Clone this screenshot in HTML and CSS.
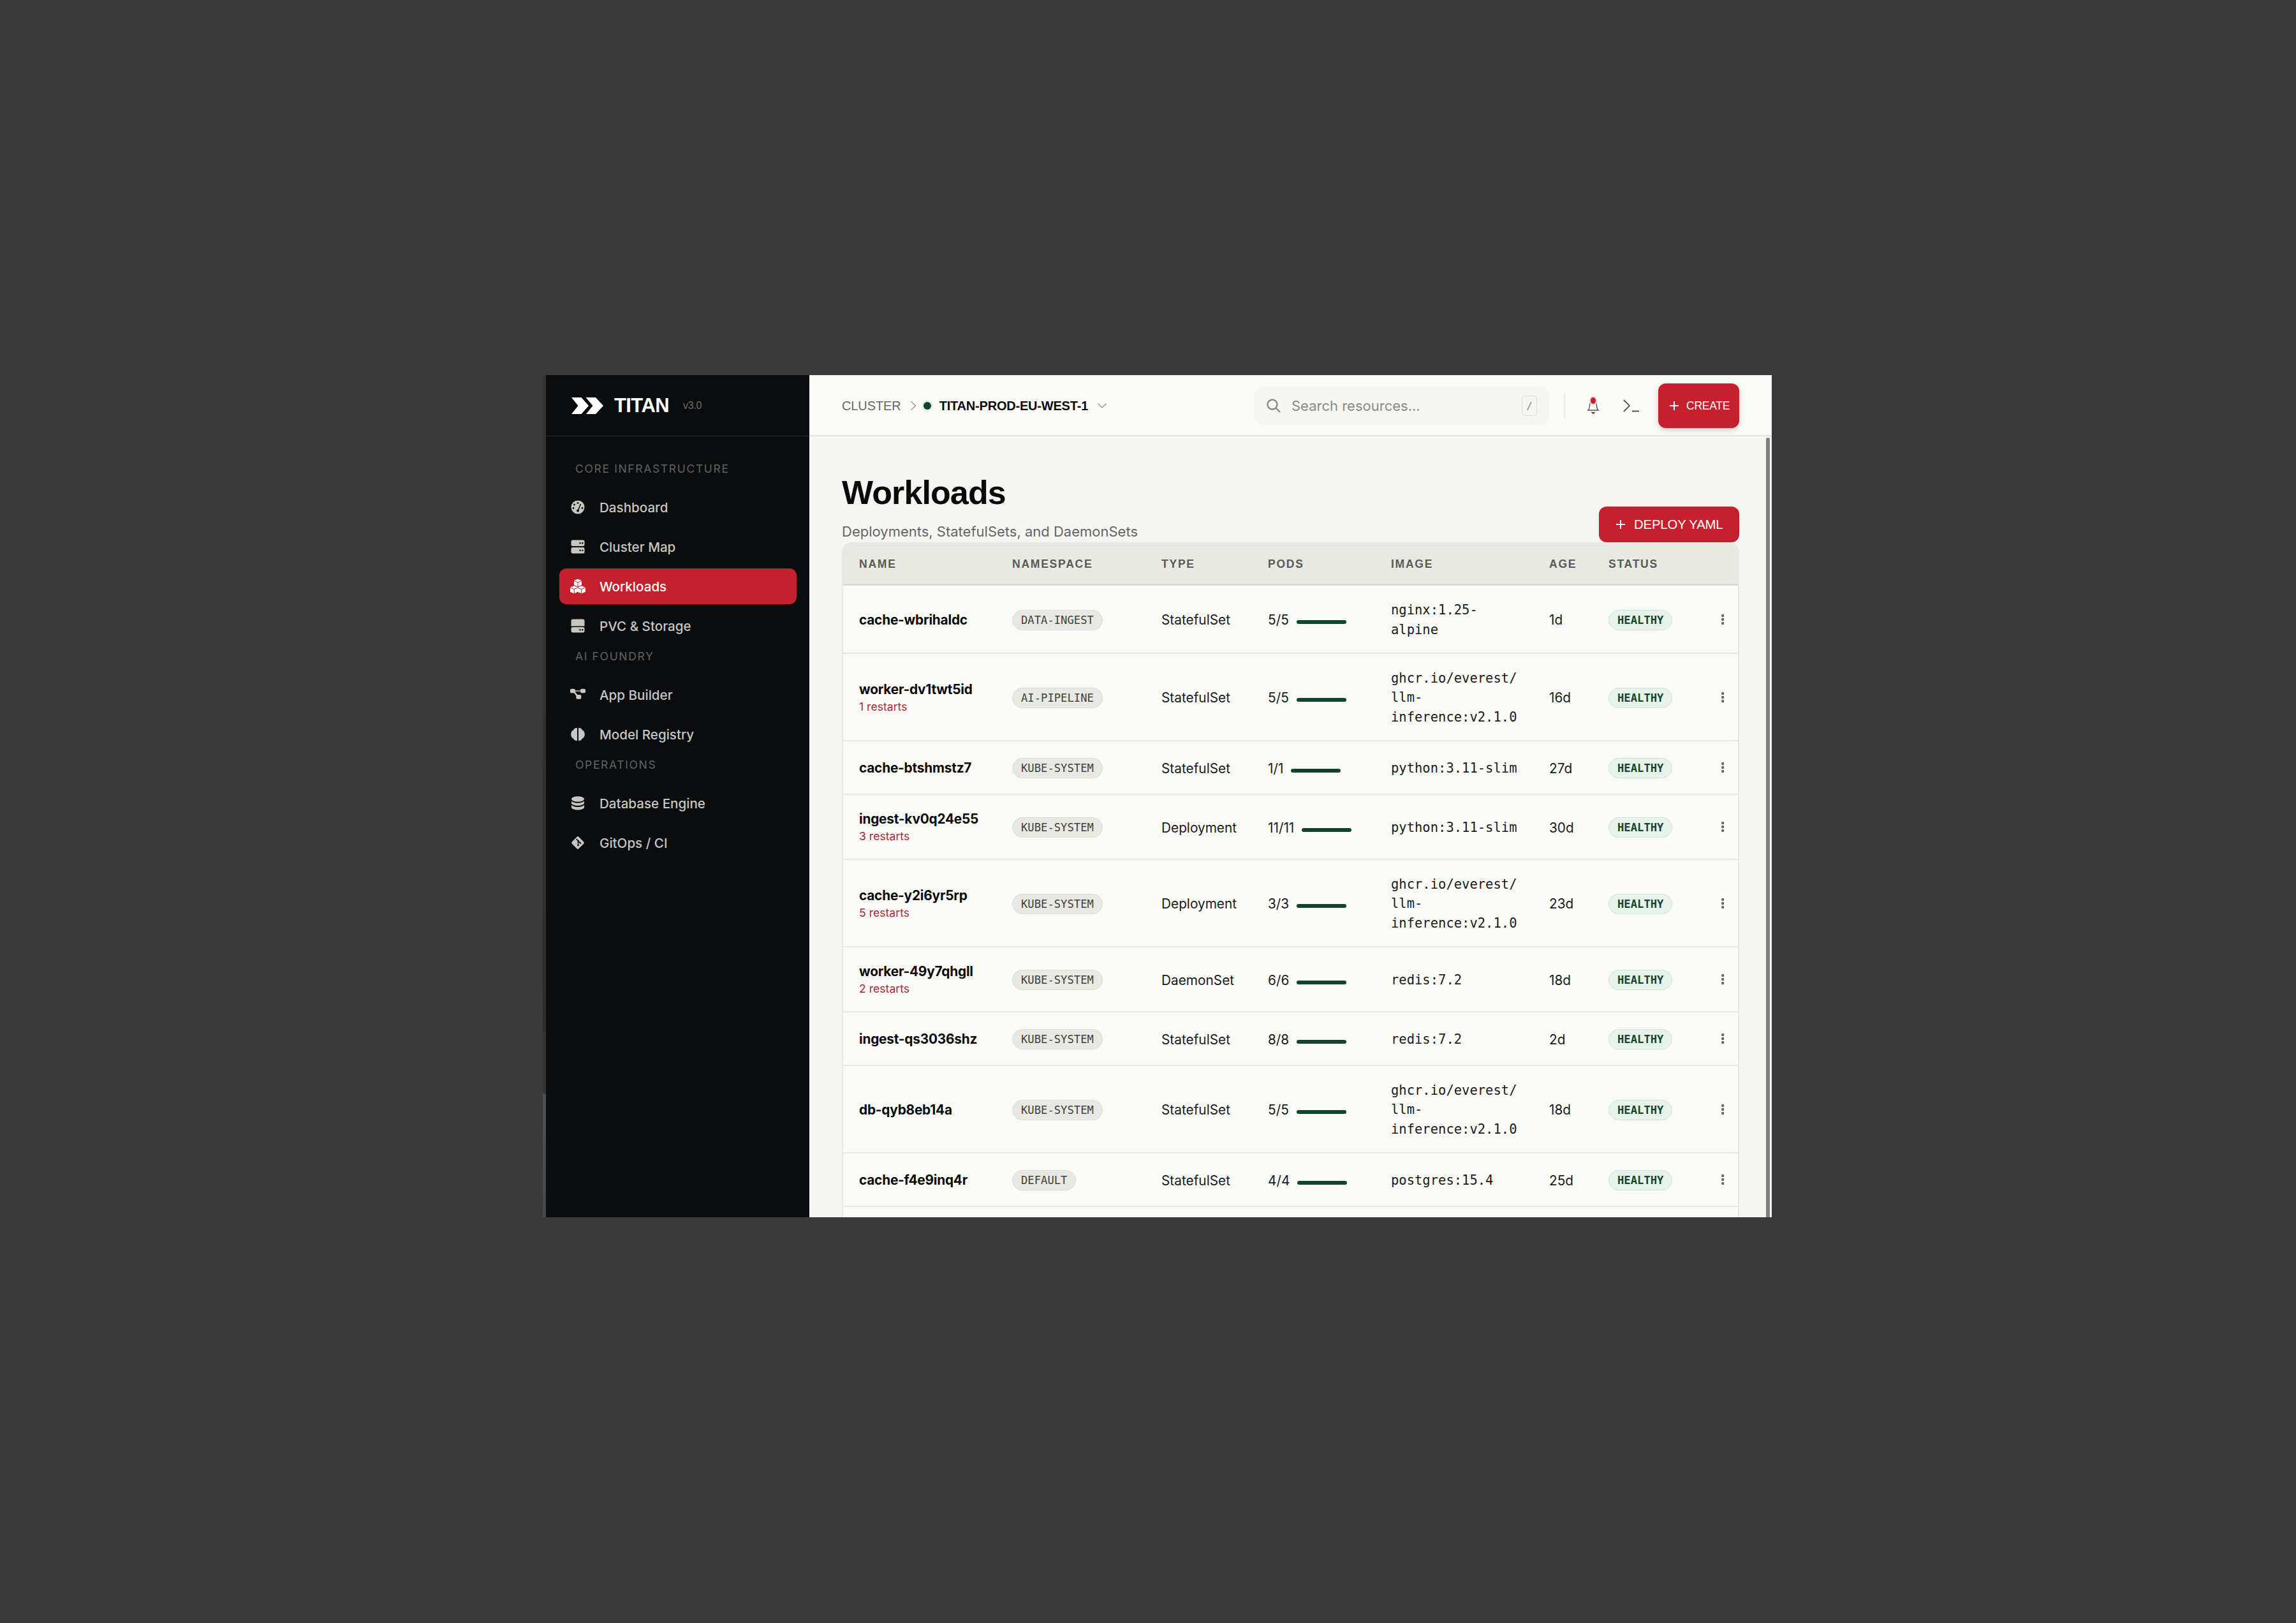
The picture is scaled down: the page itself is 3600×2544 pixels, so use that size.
FILE: index.html
```html
<!DOCTYPE html>
<html lang="en">
<head>
<meta charset="utf-8">
<title>TITAN - Workloads</title>
<link rel="stylesheet" href="styles.css">
</head>
<body>
<svg class="sprite" width="0" height="0" aria-hidden="true">
  <symbol id="i-gauge" viewBox="0 0 24 24"><circle cx="12" cy="12" r="10.5"/><circle class="cut" cx="12" cy="5.5" r="1.4"/><circle class="cut" cx="6.5" cy="8" r="1.4"/><circle class="cut" cx="5" cy="13.5" r="1.4"/><circle class="cut" cx="19" cy="13.5" r="1.4"/><path class="cutline" d="M16.5 7 L12.5 17"/><circle class="cut" cx="12" cy="17.5" r="2"/></symbol>
  <symbol id="i-server" viewBox="0 0 24 24"><rect x="1.5" y="1.5" width="21" height="9.5" rx="2.5"/><rect x="1.5" y="13" width="21" height="9.5" rx="2.5"/><circle class="cut" cx="15.5" cy="6.2" r="1.3"/><circle class="cut" cx="19.3" cy="6.2" r="1.3"/><circle class="cut" cx="15.5" cy="17.8" r="1.3"/><circle class="cut" cx="19.3" cy="17.8" r="1.3"/></symbol>
  <symbol id="i-hdd" viewBox="0 0 24 24"><path d="M4.5 1.5h15a3 3 0 0 1 3 3v8h-21v-8a3 3 0 0 1 3-3z"/><rect x="1.5" y="14" width="21" height="8.5" rx="2.5"/><circle class="cut" cx="15.5" cy="18.2" r="1.3"/><circle class="cut" cx="19.3" cy="18.2" r="1.3"/></symbol>
  <symbol id="i-cubes" viewBox="0 0 24 24"><path d="M12 .5l6 2.600v6.800l-6 2.600-6-2.600V3.100z"/><path d="M6.300 11.300l5.700 2.500v6.900l-5.700 2.600L0 20.700v-6.900z"/><path d="M17.700 11.300l6.300 2.500v6.900l-6.300 2.600-5.700-2.600v-6.900z"/><path class="cutred" d="M6 3.300l6 2.600 6-2.600M12 5.900v6.500M0 14l6.300 2.600L12 14M6.300 16.600v6.700M12 14l5.700 2.600L24 14M17.700 16.600v6.700"/></symbol>
  <symbol id="i-diagram" viewBox="0 0 576 512"><path d="M0 80C0 53.500 21.500 32 48 32h96c26.500 0 48 21.500 48 48V96H384V80c0-26.500 21.500-48 48-48h96c26.500 0 48 21.500 48 48v64c0 26.500-21.500 48-48 48H432c-26.500 0-48-21.500-48-48V128H192v16c0 1.700-.1 3.400-.3 5L272 256h96c26.500 0 48 21.500 48 48v64c0 26.500-21.500 48-48 48H272c-26.500 0-48-21.500-48-48V304c0-1.700 .1-3.400 .3-5L144 192H48c-26.500 0-48-21.500-48-48V80z"/></symbol>
  <symbol id="i-brain" viewBox="0 0 24 24"><path d="M11 2.200C8.200 1.400 6 3 5.500 5 3 5.800 1.200 8.500 1.200 12S3 18.200 5.500 19c.5 2 2.700 3.600 5.500 2.800z"/><path d="M13 2.200C15.800 1.400 18 3 18.500 5c2.500.8 4.300 3.500 4.300 7s-1.800 6.200-4.300 7c-.5 2-2.700 3.600-5.500 2.800z"/></symbol>
  <symbol id="i-db" viewBox="0 0 24 24"><ellipse cx="12" cy="5.500" rx="10" ry="4.200"/><path d="M2 8.500c1.500 2 5.500 3.200 10 3.200s8.500-1.200 10-3.200v3.300c0 2.200-4.500 4-10 4s-10-1.800-10-4z"/><path d="M2 14.800c1.500 2 5.500 3.200 10 3.200s8.500-1.200 10-3.200v3.700c0 2.200-4.500 4-10 4s-10-1.800-10-4z"/></symbol>
  <symbol id="i-git" viewBox="0 0 24 24"><rect x="4.500" y="4.500" width="15" height="15" rx="2" transform="rotate(45 12 12)"/><path class="cutline" d="M9.500 6l6.500 6.500M12.500 9v7"/><circle class="cut" cx="12.500" cy="9" r="1.300"/><circle class="cut" cx="16" cy="12.500" r="1.300"/><circle class="cut" cx="12.500" cy="16" r="1.300"/></symbol>
  <symbol id="i-plus" viewBox="0 0 16 16"><path d="M8 1v14M1 8h14"/></symbol>
  <symbol id="i-kebab" viewBox="0 0 6 24"><circle cx="3" cy="4" r="3"/><circle cx="3" cy="12" r="3"/><circle cx="3" cy="20" r="3"/></symbol>
</svg>
<div class="window">
  <div class="edge"></div>
  <aside class="sidebar">
    <header class="brand">
      <svg class="logo" viewBox="0 0 50 26"><polygon points="0,0 15.500,0 27,13 15.500,26 0,26 10.500,13"/><polygon points="22.500,0 38,0 50,13 38,26 23,26 33.500,13"/></svg>
      <span class="brand-name">TITAN</span>
      <span class="brand-ver">v3.0</span>
    </header>
    <nav class="nav">
      <div class="nav-label">CORE INFRASTRUCTURE</div>
      <a class="nav-item"><svg class="nav-icon"><use href="#i-gauge"/></svg>Dashboard</a>
      <a class="nav-item"><svg class="nav-icon"><use href="#i-server"/></svg>Cluster Map</a>
      <a class="nav-item active"><svg class="nav-icon"><use href="#i-cubes"/></svg>Workloads</a>
      <a class="nav-item"><svg class="nav-icon"><use href="#i-hdd"/></svg>PVC &amp; Storage</a>
      <div class="nav-label">AI FOUNDRY</div>
      <a class="nav-item"><svg class="nav-icon"><use href="#i-diagram"/></svg>App Builder</a>
      <a class="nav-item"><svg class="nav-icon"><use href="#i-brain"/></svg>Model Registry</a>
      <div class="nav-label">OPERATIONS</div>
      <a class="nav-item"><svg class="nav-icon"><use href="#i-db"/></svg>Database Engine</a>
      <a class="nav-item"><svg class="nav-icon"><use href="#i-git"/></svg>GitOps / CI</a>
    </nav>
  </aside>
  <div class="content">
    <header class="topbar">
      <div class="crumbs">
        <span class="crumb-root">CLUSTER</span>
        <svg class="crumb-sep" viewBox="0 0 10 16"><path d="M1.500 1.500L8.500 8l-7 6.500"/></svg>
        <span class="crumb-dot"></span>
        <span class="crumb-current">TITAN-PROD-EU-WEST-1</span>
        <svg class="crumb-down" viewBox="0 0 16 10"><path d="M1.500 1.500L8 8l6.500-6.500"/></svg>
      </div>
      <div class="tools">
        <div class="search">
          <svg class="search-icon" viewBox="0 0 24 24"><circle cx="10" cy="10" r="7.500"/><path d="M15.500 15.500L22 22"/></svg>
          <span class="search-text">Search resources...</span>
          <kbd class="search-key">/</kbd>
        </div>
        <span class="tool-sep"></span>
        <span class="bell">
          <svg class="bell-icon" viewBox="0 0 20 26"><path d="M6 7.500C4.500 9 4.500 11 4.500 13c0 3-1 5.500-2.500 7h16c-1.500-1.500-2.500-4-2.500-7 0-2 0-4-1.500-5.500M8 23.500h4l-2 2z"/></svg>
          <span class="bell-dot"></span>
        </span>
        <svg class="term-icon" viewBox="0 0 26 20"><path d="M1 1l9 9-9 9M14 18.500h11"/></svg>
        <button class="btn btn-create"><svg class="btn-plus"><use href="#i-plus"/></svg>CREATE</button>
      </div>
    </header>
    <main class="main">
      <div class="page-head">
        <div>
          <h1 class="page-title">Workloads</h1>
          <p class="page-sub">Deployments, StatefulSets, and DaemonSets</p>
        </div>
        <button class="btn btn-deploy"><svg class="btn-plus"><use href="#i-plus"/></svg>DEPLOY YAML</button>
      </div>
      <div class="table-wrap">
        <table class="table">
          <colgroup><col class="c1"><col class="c2"><col class="c3"><col class="c4"><col class="c5"><col class="c6"><col class="c7"><col class="c8"></colgroup>
          <thead><tr><th>NAME</th><th>NAMESPACE</th><th>TYPE</th><th>PODS</th><th>IMAGE</th><th>AGE</th><th>STATUS</th><th></th></tr></thead>
          <tbody>
            <tr class="h2l"><td><div class="wl-name">cache-wbrihaldc</div></td><td><span class="ns">DATA-INGEST</span></td><td>StatefulSet</td><td><span class="pods">5/5</span><span class="bar"></span></td><td class="img">nginx:1.25-alpine</td><td>1d</td><td><span class="ok">HEALTHY</span></td><td class="act"><svg class="kebab"><use href="#i-kebab"/></svg></td></tr>
            <tr class="h3l"><td><div class="wl-name">worker-dv1twt5id</div><div class="wl-rs">1 restarts</div></td><td><span class="ns">AI-PIPELINE</span></td><td>StatefulSet</td><td><span class="pods">5/5</span><span class="bar"></span></td><td class="img">ghcr.io/everest/<wbr>llm-<wbr>inference:v2.1.0</td><td>16d</td><td><span class="ok">HEALTHY</span></td><td class="act"><svg class="kebab"><use href="#i-kebab"/></svg></td></tr>
            <tr><td><div class="wl-name">cache-btshmstz7</div></td><td><span class="ns">KUBE-SYSTEM</span></td><td>StatefulSet</td><td><span class="pods">1/1</span><span class="bar"></span></td><td class="img">python:3.11-slim</td><td>27d</td><td><span class="ok">HEALTHY</span></td><td class="act"><svg class="kebab"><use href="#i-kebab"/></svg></td></tr>
            <tr class="hrs"><td><div class="wl-name">ingest-kv0q24e55</div><div class="wl-rs">3 restarts</div></td><td><span class="ns">KUBE-SYSTEM</span></td><td>Deployment</td><td><span class="pods">11/11</span><span class="bar"></span></td><td class="img">python:3.11-slim</td><td>30d</td><td><span class="ok">HEALTHY</span></td><td class="act"><svg class="kebab"><use href="#i-kebab"/></svg></td></tr>
            <tr class="h3l"><td><div class="wl-name">cache-y2i6yr5rp</div><div class="wl-rs">5 restarts</div></td><td><span class="ns">KUBE-SYSTEM</span></td><td>Deployment</td><td><span class="pods">3/3</span><span class="bar"></span></td><td class="img">ghcr.io/everest/<wbr>llm-<wbr>inference:v2.1.0</td><td>23d</td><td><span class="ok">HEALTHY</span></td><td class="act"><svg class="kebab"><use href="#i-kebab"/></svg></td></tr>
            <tr class="hrs"><td><div class="wl-name">worker-49y7qhgll</div><div class="wl-rs">2 restarts</div></td><td><span class="ns">KUBE-SYSTEM</span></td><td>DaemonSet</td><td><span class="pods">6/6</span><span class="bar"></span></td><td class="img">redis:7.2</td><td>18d</td><td><span class="ok">HEALTHY</span></td><td class="act"><svg class="kebab"><use href="#i-kebab"/></svg></td></tr>
            <tr><td><div class="wl-name">ingest-qs3036shz</div></td><td><span class="ns">KUBE-SYSTEM</span></td><td>StatefulSet</td><td><span class="pods">8/8</span><span class="bar"></span></td><td class="img">redis:7.2</td><td>2d</td><td><span class="ok">HEALTHY</span></td><td class="act"><svg class="kebab"><use href="#i-kebab"/></svg></td></tr>
            <tr class="h3l"><td><div class="wl-name">db-qyb8eb14a</div></td><td><span class="ns">KUBE-SYSTEM</span></td><td>StatefulSet</td><td><span class="pods">5/5</span><span class="bar"></span></td><td class="img">ghcr.io/everest/<wbr>llm-<wbr>inference:v2.1.0</td><td>18d</td><td><span class="ok">HEALTHY</span></td><td class="act"><svg class="kebab"><use href="#i-kebab"/></svg></td></tr>
            <tr><td><div class="wl-name">cache-f4e9inq4r</div></td><td><span class="ns">DEFAULT</span></td><td>StatefulSet</td><td><span class="pods">4/4</span><span class="bar"></span></td><td class="img">postgres:15.4</td><td>25d</td><td><span class="ok">HEALTHY</span></td><td class="act"><svg class="kebab"><use href="#i-kebab"/></svg></td></tr>
            <tr><td></td><td></td><td></td><td></td><td></td><td></td><td></td><td></td></tr>
          </tbody>
        </table>
      </div>
      <div class="scroll-thumb"></div>
    </main>
  </div>
</div>
</body>
</html>
```
FILE: styles.css
```css
* { box-sizing: border-box; }
html, body { margin: 0; height: 100%; }
body {
  background: #3a3a3a;
  padding: 588px 0 0 851px;
  font-family: "Inter", "Liberation Sans", sans-serif;
  overflow: hidden;
}
.sprite { position: absolute; }
.window { display: flex; width: 1927px; height: 1320px; overflow: hidden; }
.edge {
  width: 5px;
  flex: none;
  background: linear-gradient(#333537 0, #2a2c2e 1030px, #343535 1030px, #343535 1125px, #46525a 1128px, #45494b 100%);
}

/* sidebar */
.sidebar { width: 413px; flex: none; background: #0a0c0e; color: #c6c6c2; }
.brand {
  height: 96px;
  border-bottom: 1px solid #2e3032;
  display: flex;
  align-items: center;
  padding-left: 40px;
}
.logo { width: 50px; height: 26px; fill: #fff; flex: none; }
.brand-name { margin-left: 17px; font: 700 31px "Liberation Sans", sans-serif; letter-spacing: -0.6px; color: #fff; }
.brand-ver { margin-left: 22px; font: 400 16px "Liberation Sans", sans-serif; color: #6c6c6c; letter-spacing: -0.3px; }
.nav { padding: 37px 20px 0 21px; display: flex; flex-direction: column; }
.nav-label {
  height: 28px;
  line-height: 28px;
  margin: 0 0 18px 25px;
  font-size: 17.6px;
  letter-spacing: 1.6px;
  font-weight: 400;
  color: #626262;
}
.nav-item {
  height: 56px;
  margin-bottom: 6px;
  border-radius: 11px;
  display: flex;
  align-items: center;
  gap: 22px;
  padding-left: 17px;
  font-size: 20.6px;
  font-weight: 500;
}
.nav-item.active { background: #c4202d; color: #fff; }
.nav-icon { width: 24px; height: 24px; fill: currentColor; flex: none; }
.cut { fill: #0a0c0e; }
.cutline { fill: none; stroke: #0a0c0e; stroke-width: 1.6; }
.cutred { fill: none; stroke: #c4202d; stroke-width: 1; }

/* top bar */
.content { flex: 1; min-width: 0; display: flex; flex-direction: column; background: #f5f5f1; }
.topbar {
  height: 96px;
  flex: none;
  background: #fafaf7;
  border-bottom: 2px solid #e3e3de;
  display: flex;
  align-items: center;
  justify-content: space-between;
  padding: 2px 51px 0;
}
.crumbs { display: flex; align-items: center; font-family: "Liberation Sans", sans-serif; font-size: 20px; }
.crumb-root { color: #666; letter-spacing: -0.1px; }
.crumb-sep { width: 10px; height: 16px; margin-left: 14px; fill: none; stroke: #999; stroke-width: 1.5; }
.crumb-dot {
  width: 12px; height: 12px; margin-left: 11px; border-radius: 50%;
  background: #0f4430; box-shadow: 0 0 0 3px #e3efe7;
}
.crumb-current { margin-left: 13px; font-weight: 700; color: #0a0a0a; letter-spacing: -0.2px; }
.crumb-down { width: 16px; height: 10px; margin-left: 14px; fill: none; stroke: #999; stroke-width: 1.5; }
.tools { display: flex; align-items: center; }
.search {
  width: 462px; height: 60px;
  background: #f5f5f1;
  border-radius: 14px;
  display: flex;
  align-items: center;
  padding: 0 19px 0 18px;
}
.search-icon { width: 24px; height: 24px; fill: none; stroke: #888; stroke-width: 2.4; flex: none; }
.search-text { margin-left: 16px; flex: 1; font-size: 22px; color: #8a8a86; }
.search-key {
  width: 24px; height: 32px;
  border: 1px solid #dcdcd6;
  border-radius: 6px;
  display: flex; align-items: center; justify-content: center;
  font: 400 16px "DejaVu Sans Mono", monospace;
  color: #8a8a86;
}
.tool-sep { width: 1px; height: 38px; margin-left: 24px; background: #dcdcd6; }
.bell { position: relative; width: 20px; height: 26px; margin-left: 34px; }
.bell-icon { width: 20px; height: 26px; fill: none; stroke: #555; stroke-width: 1.4; display: block; }
.bell-dot {
  position: absolute; left: 6px; top: 0; width: 8px; height: 10px; border-radius: 50%;
  background: #c4202d; box-shadow: 0 0 0 2px #f3cfd2;
}
.term-icon { width: 26px; height: 20px; margin-left: 37px; fill: none; stroke: #555; stroke-width: 1.8; }
.btn {
  border: 0;
  background: #c4202d;
  color: #fff;
  display: flex;
  align-items: center;
  font-family: "Liberation Sans", sans-serif;
}
.btn-plus { width: 16px; height: 16px; fill: none; stroke: #fff; stroke-width: 2; flex: none; }
.btn-create {
  width: 127px; height: 70px; margin-left: 29px;
  border-radius: 12px;
  padding: 0 0 0 17px;
  gap: 11px;
  font-size: 17.6px;
  letter-spacing: -0.3px;
  box-shadow: 0 3px 8px rgba(0, 0, 0, .18);
}

/* main */
.main { position: relative; flex: 1; min-height: 0; overflow: hidden; padding: 58px 51px 0; }
.page-head { display: flex; justify-content: space-between; align-items: flex-end; }
.page-title { margin: 0; font: 700 52px/60px "Liberation Sans", sans-serif; letter-spacing: -0.9px; color: #0a0a0a; }
.page-sub { margin: 14px 0 0; font-size: 22px; line-height: 34px; color: #666; }
.btn-deploy {
  width: 220px; height: 56px;
  border-radius: 12px;
  padding: 0 0 0 26px;
  gap: 13px;
  font-size: 20.4px;
  letter-spacing: -0.2px;
}
.scroll-thumb {
  position: absolute; top: 2px; bottom: 0; right: 3px; width: 6px;
  background: #808080;
  border-radius: 3px 3px 0 0;
}

/* table */
.table-wrap {
  border: 2px solid #e7e7e1;
  border-bottom: 0;
  border-radius: 16px 16px 0 0;
  overflow: hidden;
  background: #fafaf7;
}
.table { width: 100%; table-layout: fixed; border-collapse: separate; border-spacing: 0; }
.c1 { width: 240px; } .c2 { width: 234px; } .c3 { width: 167px; } .c4 { width: 193px; }
.c5 { width: 248px; } .c6 { width: 93px; } .c7 { width: 165px; } .c8 { width: 65px; }
th {
  height: 66px;
  padding: 2px 0 0 25px;
  background: #e9e9e4;
  border-bottom: 3px solid #dadad4;
  text-align: left;
  font: 700 17.6px "Liberation Sans", sans-serif;
  letter-spacing: 1.7px;
  color: #5a5a55;
}
td {
  height: 84px;
  padding: 2px 0 0 25px;
  border-bottom: 2px solid #e8e8e3;
  font-size: 20.8px;
  color: #1a1a1a;
  vertical-align: middle;
}
.h2l td { height: 107px; }
.h3l td { height: 137px; }
.hrs td { height: 102px; }
.wl-name { font-weight: 700; font-size: 20.8px; letter-spacing: -0.2px; color: #0a0a0a; line-height: 28px; }
.wl-rs { font-size: 17.6px; line-height: 26px; color: #a8283c; }
.ns, .ok {
  display: inline-block;
  height: 32px;
  line-height: 30px;
  padding: 0 13px;
  border-radius: 16px;
  font-family: "DejaVu Sans Mono", monospace;
  font-size: 17.2px;
}
.ns { background: #e9e9e4; border: 1px solid #dcdcd6; color: #3f3f3b; }
.ok { background: #e6f2ea; border: 1px solid #d0e4d7; color: #14452f; font-weight: 700; }
.pods { font-size: 20.8px; }
.bar {
  display: inline-block;
  width: 78px; height: 6px;
  margin-left: 12px;
  border-radius: 3px;
  background: #0f4430;
  vertical-align: 1px;
}
td.img { padding-right: 20px; font-family: "DejaVu Sans Mono", monospace; font-size: 20.5px; line-height: 30.6px; }
td.act { padding: 0 0 0 37px; }
.kebab { display: block; width: 4.5px; height: 18px; fill: #666; }
```
